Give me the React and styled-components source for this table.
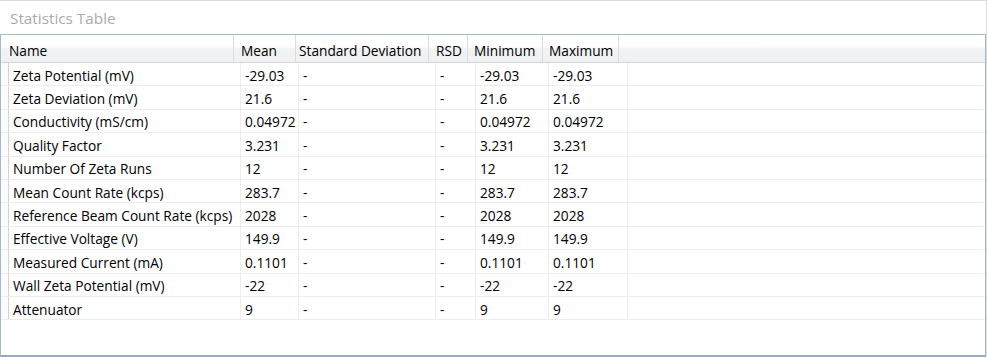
import React from "react";
import styled, { createGlobalStyle } from "styled-components";

const GlobalStyle = createGlobalStyle`
  html, body {
    margin: 0;
    padding: 0;
    background: #ffffff;
  }
  body {
    font-family: "Open Sans", "Noto Sans", "Liberation Sans", sans-serif;
  }
`;

/* header cells: width and the inset that lines each caption up with its data column */
const headerColumns = [
  { label: "Name", width: 233, inset: 8 },
  { label: "Mean", width: 62, inset: 7 },
  { label: "Standard Deviation", width: 133, inset: 3 },
  { label: "RSD", width: 39, inset: 7 },
  { label: "Minimum", width: 75, inset: 6 },
  { label: "Maximum", width: 76, inset: 6 },
];

const dataWidths = [232, 58, 137, 40, 73, 79];

const rows = [
  ["Zeta Potential (mV)", "-29.03", "-", "-", "-29.03", "-29.03"],
  ["Zeta Deviation (mV)", "21.6", "-", "-", "21.6", "21.6"],
  ["Conductivity (mS/cm)", "0.04972", "-", "-", "0.04972", "0.04972"],
  ["Quality Factor", "3.231", "-", "-", "3.231", "3.231"],
  ["Number Of Zeta Runs", "12", "-", "-", "12", "12"],
  ["Mean Count Rate (kcps)", "283.7", "-", "-", "283.7", "283.7"],
  ["Reference Beam Count Rate (kcps)", "2028", "-", "-", "2028", "2028"],
  ["Effective Voltage (V)", "149.9", "-", "-", "149.9", "149.9"],
  ["Measured Current (mA)", "0.1101", "-", "-", "0.1101", "0.1101"],
  ["Wall Zeta Potential (mV)", "-22", "-", "-", "-22", "-22"],
  ["Attenuator", "9", "-", "-", "9", "9"],
];

const Panel = styled.div`
  box-sizing: border-box;
  width: 987px;
  height: 357px;
  border-top: 1px solid #dcdcdc;
  border-right: 1px solid #dcdcdc;
  display: flex;
  flex-direction: column;
  overflow: hidden;
`;

const Title = styled.div`
  height: 33px;
  flex: none;
  display: flex;
  align-items: center;
  padding-left: 10px;
  box-sizing: border-box;
  font-size: 15.3px;
  color: #aaaaaa;
`;

const Grid = styled.div`
  box-sizing: border-box;
  flex: 1;
  width: 986px;
  border: 1px solid #a6b8cc;
  border-bottom: 2px solid #98abc1;
  display: flex;
  flex-direction: column;
  background: #ffffff;
`;

const HeaderRow = styled.div`
  display: flex;
  height: 28px;
  flex: none;
  box-sizing: border-box;
  border-bottom: 1px solid #d5d5d5;
  background: linear-gradient(
    to bottom,
    #ffffff 0%,
    #fdfdfd 45%,
    #f2f3f5 50%,
    #eff0f2 100%
  );
`;

const HeaderCell = styled.div`
  box-sizing: border-box;
  width: ${(p) => p.$w}px;
  flex: ${(p) => (p.$fill ? "1" : "none")};
  padding: 4px 0 0 ${(p) => p.$inset || 0}px;
  display: flex;
  align-items: center;
  font-size: 13.7px;
  color: #000000;
  white-space: nowrap;
  border-right: ${(p) => (p.$fill ? "none" : "1px solid #dcdcdc")};
`;

const Body = styled.div`
  display: flex;
  flex-direction: column;
`;

const DataRow = styled.div`
  display: flex;
  height: 23.4px;
  box-sizing: border-box;
  border-bottom: 1px solid #ededed;
`;

const RowHeader = styled.div`
  box-sizing: border-box;
  width: 8px;
  flex: none;
  border-right: 1px solid #d3d3d3;
  background: #fbfbfb;
`;

const DataCell = styled.div`
  box-sizing: border-box;
  width: ${(p) => p.$w}px;
  flex: ${(p) => (p.$fill ? "1" : "none")};
  padding: 2px 0 0 4px;
  display: flex;
  align-items: center;
  font-size: 13.7px;
  color: #000000;
  white-space: nowrap;
  border-right: ${(p) => (p.$fill ? "none" : "1px solid #ededed")};
`;

export default function App() {
  return (
    <>
      <GlobalStyle />
      <Panel>
        <Title>Statistics Table</Title>
        <Grid>
          <HeaderRow>
            {headerColumns.map((c) => (
              <HeaderCell key={c.label} $w={c.width} $inset={c.inset}>
                {c.label}
              </HeaderCell>
            ))}
            <HeaderCell $fill />
          </HeaderRow>
          <Body>
            {rows.map((r) => (
              <DataRow key={r[0]}>
                <RowHeader />
                {r.map((v, i) => (
                  <DataCell key={i} $w={dataWidths[i]}>
                    {v}
                  </DataCell>
                ))}
                <DataCell $fill />
              </DataRow>
            ))}
          </Body>
        </Grid>
      </Panel>
    </>
  );
}
